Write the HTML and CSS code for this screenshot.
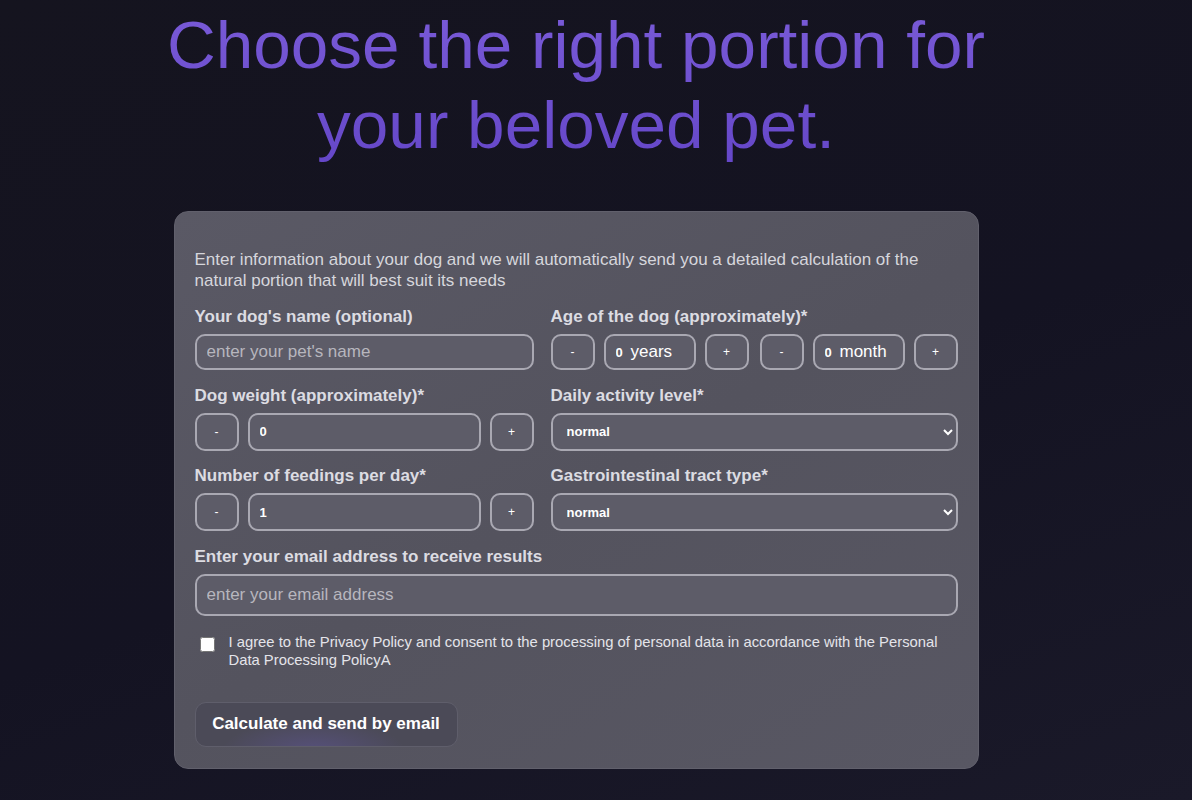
FILE: index.html
```html
<!DOCTYPE html>
<html lang="en">
<head>
    <meta charset="UTF-8">
    <meta name="viewport" content="width=device-width, initial-scale=1.0">
    <title>Portion Calculator</title>
    <link rel="stylesheet" href="styles.css">
</head>
<body>
    <div class="page">
        <h1 class="title">Choose the right portion for<br>your beloved pet.</h1>

        <form class="calc-card">
            <p class="intro">Enter information about your dog and we will automatically send you a detailed calculation of the natural portion that will best suit its needs</p>

            <div class="fields">
                <div class="field">
                    <label for="petName">Your dog's name (optional)</label>
                    <input type="text" id="petName" class="text-input" placeholder="enter your pet's name">
                </div>
                <div class="field">
                    <label>Age of the dog (approximately)*</label>
                    <div class="age-row">
                        <button type="button" class="step-btn">-</button>
                        <div class="unit-box"><input type="text" class="num-input" value="0"><span>years</span></div>
                        <button type="button" class="step-btn">+</button>
                        <button type="button" class="step-btn gap-left">-</button>
                        <div class="unit-box"><input type="text" class="num-input" value="0"><span>month</span></div>
                        <button type="button" class="step-btn">+</button>
                    </div>
                </div>

                <div class="field">
                    <label for="weight">Dog weight (approximately)*</label>
                    <div class="stepper">
                        <button type="button" class="step-btn tall">-</button>
                        <input type="text" id="weight" class="value-input" value="0">
                        <button type="button" class="step-btn tall">+</button>
                    </div>
                </div>
                <div class="field">
                    <label for="activity">Daily activity level*</label>
                    <select id="activity" class="select-input">
                        <option>normal</option>
                        <option>low</option>
                        <option>high</option>
                    </select>
                </div>

                <div class="field">
                    <label for="feedings">Number of feedings per day*</label>
                    <div class="stepper">
                        <button type="button" class="step-btn tall">-</button>
                        <input type="text" id="feedings" class="value-input" value="1">
                        <button type="button" class="step-btn tall">+</button>
                    </div>
                </div>
                <div class="field">
                    <label for="gi">Gastrointestinal tract type*</label>
                    <select id="gi" class="select-input">
                        <option>normal</option>
                        <option>sensitive</option>
                    </select>
                </div>

                <div class="field wide">
                    <label for="email">Enter your email address to receive results</label>
                    <input type="email" id="email" class="text-input email" placeholder="enter your email address">
                </div>
            </div>

            <label class="agree">
                <input type="checkbox">
                <span>I agree to the Privacy Policy and consent to the processing of personal data in accordance with the Personal Data Processing PolicyA</span>
            </label>

            <button type="submit" class="submit-btn">Calculate and send by email</button>
        </form>
    </div>
</body>
</html>
```

FILE: styles.css
```css
html, body {
    margin: 0;
    padding: 0;
}

body {
    font-family: "Liberation Sans", Arial, sans-serif;
    background: linear-gradient(160deg, #15141f 0%, #141322 55%, #1a1929 100%);
    min-height: 800px;
    color: #ffffff;
}

.page {
    width: 805px;
    margin: 0 auto;
    position: relative;
    left: -20px;
}

.title {
    margin: 0 -120px;
    padding-top: 5px;
    text-align: center;
    font-size: 67.5px;
    font-weight: normal;
    line-height: 80px;
    color: #6e50d0;
    background: linear-gradient(180deg, #7a5bd8 0%, #6547c8 100%);
    -webkit-background-clip: text;
    background-clip: text;
    -webkit-text-fill-color: transparent;
    white-space: nowrap;
}

.calc-card {
    margin-top: 46px;
    box-sizing: border-box;
    width: 805px;
    padding: 37px 20px 21px 20px;
    border-radius: 14px;
    background: linear-gradient(150deg, #5a5965 0%, #54535e 50%, #585763 100%);
    border: 1px solid #61606c;
    display: flex;
    flex-direction: column;
}

.intro {
    margin: 0;
    font-size: 17px;
    line-height: 21px;
    color: #d6d6dc;
}

.fields {
    margin-top: 17px;
    display: grid;
    grid-template-columns: 339px 1fr;
    column-gap: 17px;
    row-gap: 16.5px;
}

.field {
    display: flex;
    flex-direction: column;
}

.field.wide {
    grid-column: 1 / 3;
}

.field > label {
    font-size: 17px;
    font-weight: bold;
    line-height: 18px;
    color: #dcdce2;
    margin-bottom: 8px;
}

.text-input,
.value-input,
.select-input,
.unit-box,
.step-btn {
    box-sizing: border-box;
    font-family: "Liberation Sans", Arial, sans-serif;
    background-color: #5d5c68;
    border: 2px solid #a9a8b2;
    border-radius: 10px;
    color: #ffffff;
    outline: none;
}

.text-input {
    height: 36px;
    padding: 0 10px;
    font-size: 17px;
}

.text-input::placeholder {
    color: #b7b6be;
}

.text-input.email {
    height: 42px;
}

.age-row {
    display: flex;
    gap: 9px;
}

.step-btn {
    width: 44px;
    height: 36px;
    padding: 0;
    font-size: 12px;
    color: #ffffff;
    cursor: pointer;
}

.step-btn.tall {
    height: 38px;
}

.step-btn.gap-left {
    margin-left: 2px;
}

.unit-box {
    width: 92px;
    height: 36px;
    display: flex;
    align-items: center;
    padding-left: 10px;
    font-size: 17px;
}

.num-input {
    width: 12px;
    border: none;
    background: transparent;
    color: #ffffff;
    font-size: 13px;
    font-weight: bold;
    padding: 0;
    outline: none;
    font-family: "Liberation Sans", Arial, sans-serif;
}

.unit-box span {
    margin-left: 3px;
}

.stepper {
    display: flex;
    gap: 9px;
}

.value-input {
    flex-grow: 1;
    min-width: 0;
    height: 38px;
    padding: 0 10px;
    font-size: 13px;
    font-weight: bold;
}

.select-input {
    height: 38px;
    padding: 0 10px;
    font-size: 13px;
    font-weight: bold;
    color-scheme: dark;
}

.agree {
    margin-top: 17px;
    display: flex;
    align-items: flex-start;
    gap: 14px;
    font-size: 14.8px;
    line-height: 18px;
    color: #e4e4ea;
    padding-left: 5px;
}

.agree input {
    margin: 4px 0 0 0;
    width: 15px;
    height: 15px;
    flex-shrink: 0;
}

.submit-btn {
    margin-top: 33px;
    align-self: flex-start;
    width: 263px;
    height: 45px;
    border-radius: 11px;
    border: 1px solid #5f5e6b;
    background: radial-gradient(ellipse at 45% 110%, #56507a 0%, #4b4a57 45%, #4b4a57 100%);
    color: #ffffff;
    font-family: "Liberation Sans", Arial, sans-serif;
    font-size: 17px;
    font-weight: bold;
    cursor: pointer;
}
```
